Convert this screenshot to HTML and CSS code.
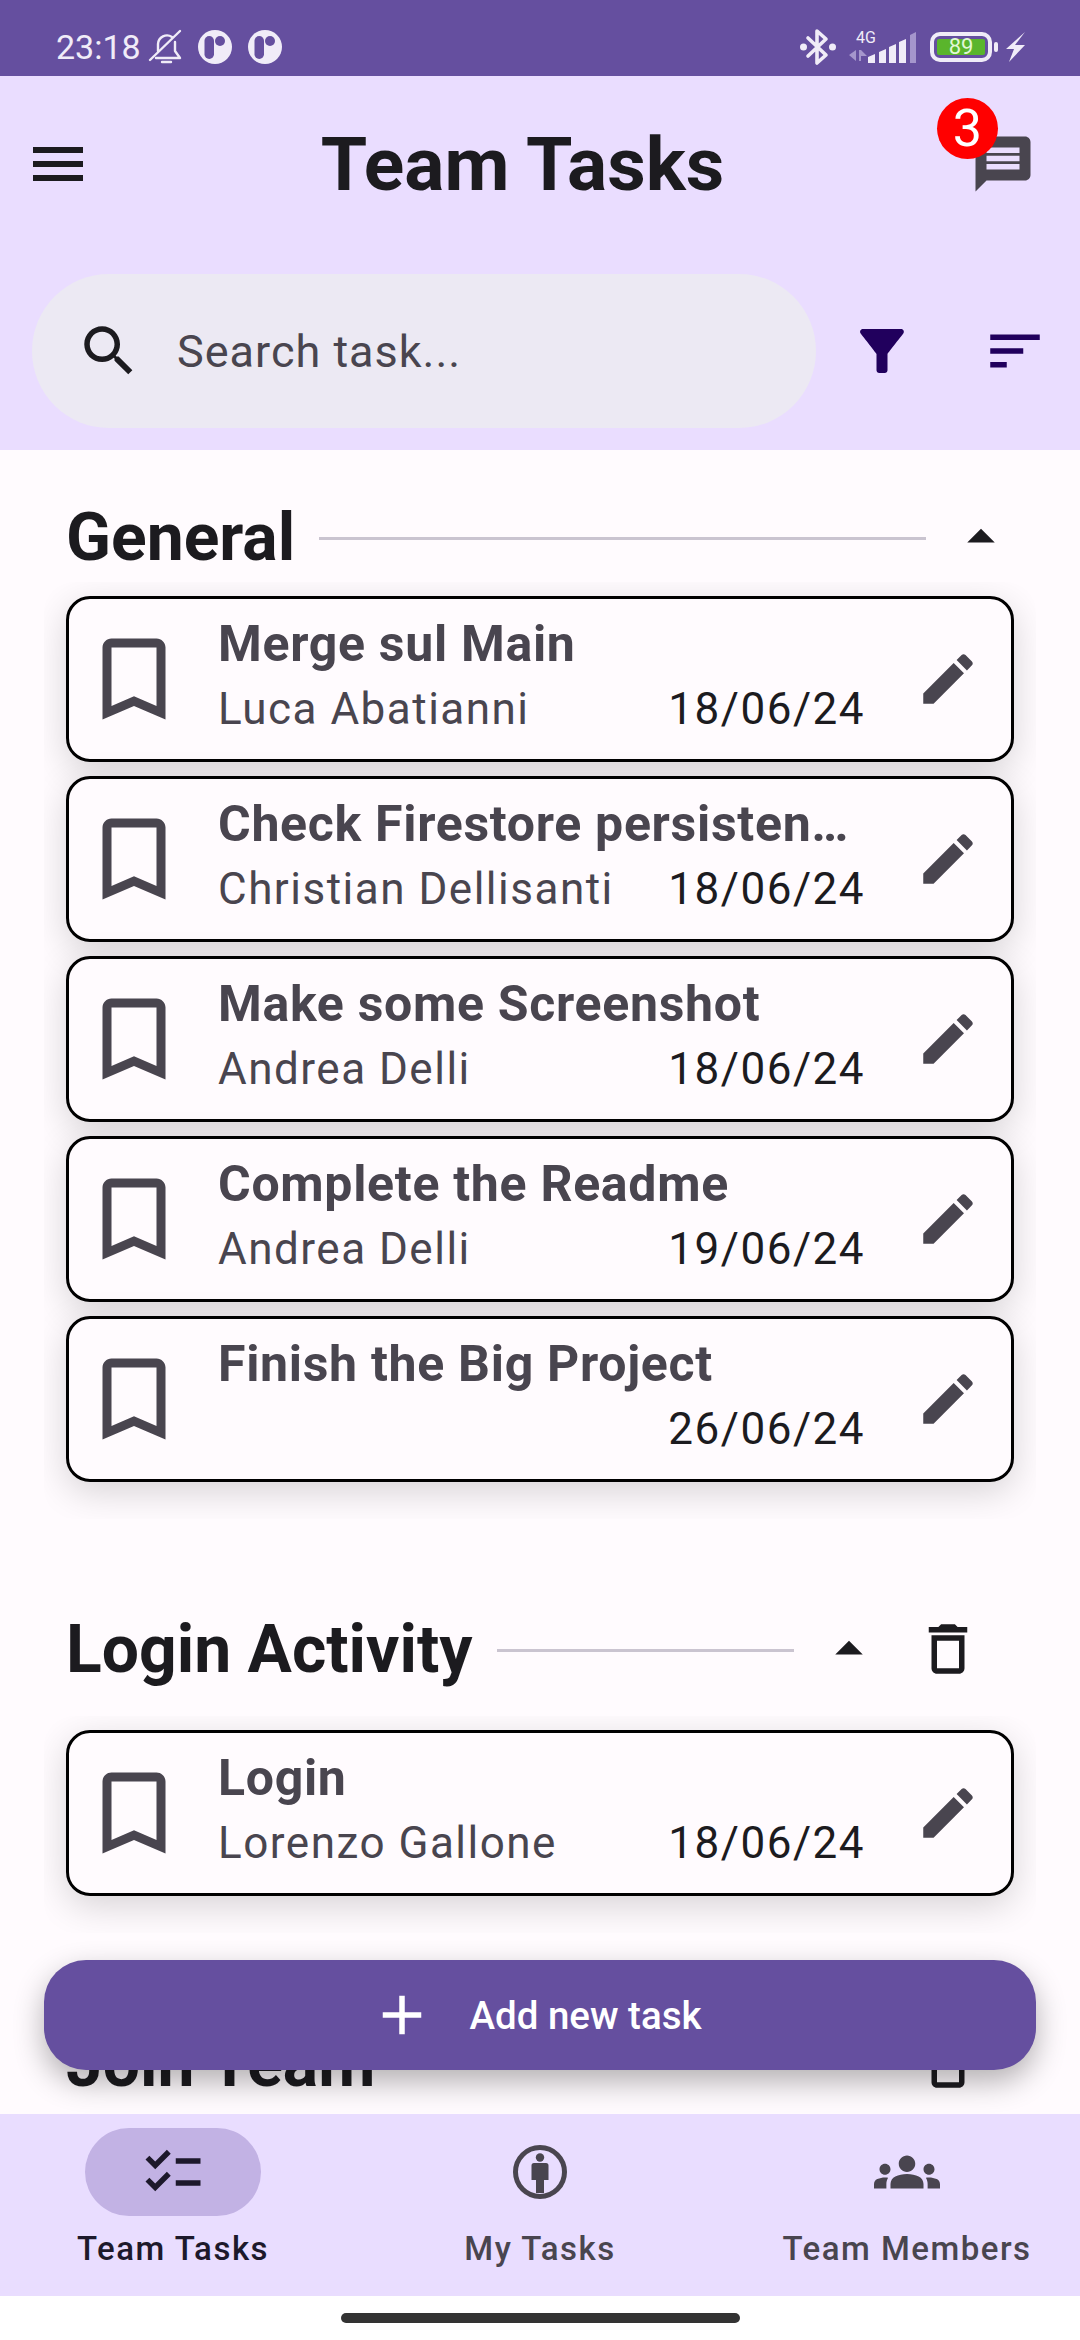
FILE: index.html
```html
<!DOCTYPE html>
<html lang="en">
<head>
  <meta charset="UTF-8" />
  <meta name="viewport" content="width=device-width, initial-scale=1.0"/>
  <title>Team Tasks</title>
  <link rel="stylesheet" href="styles.css">
</head>
<body>

  <div class="status-bar">
    <div class="status-left">
      <span class="clock">23:18</span>
      <svg class="bell-off" viewBox="0 0 36 36" fill="none" stroke="#f0ecf8" stroke-width="2.4" stroke-linecap="round" stroke-linejoin="round">
        <path d="M10 22V15a9 9 0 0 1 14-7"/>
        <path d="M27 13v9l5 7H8"/>
        <path d="M14 33h9"/>
        <path d="M2 31 32 2"/>
      </svg>
      <svg class="app-dot" viewBox="0 0 34 34">
        <circle cx="17" cy="17" r="17" fill="#f0ecf8"/>
        <rect x="6.5" y="6" width="9.5" height="23" rx="4.7" fill="#654f9f"/>
        <circle cx="22" cy="11" r="5" fill="#654f9f"/>
      </svg>
      <svg class="app-dot" viewBox="0 0 34 34">
        <circle cx="17" cy="17" r="17" fill="#f0ecf8"/>
        <rect x="6.5" y="6" width="9.5" height="23" rx="4.7" fill="#654f9f"/>
        <circle cx="22" cy="11" r="5" fill="#654f9f"/>
      </svg>
    </div>
    <div class="status-right">
      <svg class="bluetooth" viewBox="0 0 36 40">
        <path d="M8 11 26 28 17 36V4l9 8L8 29" fill="none" stroke="#f0ecf8" stroke-width="3.6" stroke-linejoin="round" stroke-linecap="round"/>
        <circle cx="3.5" cy="20" r="3.5" fill="#f0ecf8"/>
        <circle cx="32.5" cy="20" r="3.5" fill="#f0ecf8"/>
      </svg>
      <svg class="signal" viewBox="0 -8 68 40">
        <text class="net-label" x="7" y="12">4G</text>
        <path d="M7 19v11l-7-6zM12 19l6 6-6 0v5h-2V19z" fill="#a596cc"/>
        <path d="M19 26l7-3v9h-7zM30 21l7-3v14h-7zM40 16l7-3v19h-7zM50 11l7-3v24h-7z" fill="#f0ecf8"/>
        <path d="M61 4l6-3v31h-6z" fill="#a596cc"/>
      </svg>
      <div class="battery-wrap">
        <div class="battery"><span class="battery-fill">89</span></div>
        <span class="battery-tip"></span>
      </div>
      <svg class="bolt" viewBox="0 0 20 30">
        <path d="M19 0 9 13h10L3 30l5-13H0z" fill="#f0ecf8"/>
      </svg>
    </div>
  </div>

  <div class="top-bar">
    <div class="title-row">
      <svg class="menu-icon" viewBox="0 0 50 34"><path d="M0 0h50v6H0zM0 14h50v6H0zM0 28h50v6H0z"/></svg>
      <h1>Team Tasks</h1>
      <div class="chat-btn">
        <svg class="icon chat-icon" viewBox="0 0 24 24"><path d="M20 2H4c-1.100 0-1.990.9-1.990 2L2 22l4-4h14c1.100 0 2-.9 2-2V4c0-1.100-.9-2-2-2zm-2 12H6v-2h12v2zm0-3H6V9h12v2zm0-3H6V6h12v2z"/></svg>
        <span class="badge">3</span>
      </div>
    </div>
    <div class="search-row">
      <div class="search">
        <svg class="icon search-icon" viewBox="0 0 24 24"><path d="M15.500 14h-.79l-.28-.27C15.410 12.590 16 11.110 16 9.500 16 5.910 13.090 3 9.500 3S3 5.910 3 9.500 5.910 16 9.500 16c1.610 0 3.090-.59 4.230-1.570l.27.28v.79l5 4.990L20.490 19l-4.990-5zm-6 0C7.010 14 5 11.990 5 9.500S7.010 5 9.500 5 14 7.010 14 9.500 11.990 14 9.500 14z"/></svg>
        <span class="search-text">Search task...</span>
      </div>
      <svg class="icon filter-icon" viewBox="0 0 24 24"><path d="M4.250 5.610C6.270 8.200 10 13 10 13v6c0 .55.45 1 1 1h2c.55 0 1-.45 1-1v-6s3.720-4.800 5.740-7.390c.51-.66.04-1.610-.79-1.610H5.040c-.83 0-1.300.95-.79 1.610z"/></svg>
      <svg class="icon sort-icon" viewBox="0 0 24 24"><path d="M3 18h6v-2H3v2zM3 6v2h18V6H3zm0 7h12v-2H3v2z"/></svg>
    </div>
  </div>

  <div class="content">
    <div class="section">
      <div class="section-head">
        <h2>General</h2>
        <span class="rule"></span>
        <svg class="icon arrow" viewBox="0 0 24 24"><path d="M7 14l5-5 5 5z"/></svg>
      </div>
      <div class="card-group">
        <div class="card">
          <svg class="bookmark" viewBox="0 0 24 24"><path d="M17 3H7c-1.100 0-2 .9-2 2v16l7-3 7 3V5c0-1.100-.9-2-2-2zm0 15l-5-2.180L7 18V5h10v13z"/></svg>
          <div class="card-text">
            <div class="card-title">Merge sul Main</div>
            <div class="card-sub"><span>Luca Abatianni</span><span class="date">18/06/24</span></div>
          </div>
          <svg class="icon edit" viewBox="0 0 24 24"><path d="M3 17.250V21h3.750L17.810 9.940l-3.750-3.750L3 17.250zM20.710 7.040c.39-.39.39-1.020 0-1.410l-2.340-2.340c-.39-.39-1.020-.39-1.410 0l-1.830 1.830 3.750 3.750 1.830-1.830z"/></svg>
        </div>
        <div class="card">
          <svg class="bookmark" viewBox="0 0 24 24"><path d="M17 3H7c-1.100 0-2 .9-2 2v16l7-3 7 3V5c0-1.100-.9-2-2-2zm0 15l-5-2.180L7 18V5h10v13z"/></svg>
          <div class="card-text">
            <div class="card-title">Check Firestore persisten…</div>
            <div class="card-sub"><span>Christian Dellisanti</span><span class="date">18/06/24</span></div>
          </div>
          <svg class="icon edit" viewBox="0 0 24 24"><path d="M3 17.250V21h3.750L17.810 9.940l-3.750-3.750L3 17.250zM20.710 7.040c.39-.39.39-1.020 0-1.410l-2.340-2.340c-.39-.39-1.020-.39-1.410 0l-1.830 1.830 3.750 3.750 1.830-1.830z"/></svg>
        </div>
        <div class="card">
          <svg class="bookmark" viewBox="0 0 24 24"><path d="M17 3H7c-1.100 0-2 .9-2 2v16l7-3 7 3V5c0-1.100-.9-2-2-2zm0 15l-5-2.180L7 18V5h10v13z"/></svg>
          <div class="card-text">
            <div class="card-title">Make some Screenshot</div>
            <div class="card-sub"><span>Andrea Delli</span><span class="date">18/06/24</span></div>
          </div>
          <svg class="icon edit" viewBox="0 0 24 24"><path d="M3 17.250V21h3.750L17.810 9.940l-3.750-3.750L3 17.250zM20.710 7.040c.39-.39.39-1.020 0-1.410l-2.340-2.340c-.39-.39-1.020-.39-1.410 0l-1.830 1.830 3.750 3.750 1.830-1.830z"/></svg>
        </div>
        <div class="card">
          <svg class="bookmark" viewBox="0 0 24 24"><path d="M17 3H7c-1.100 0-2 .9-2 2v16l7-3 7 3V5c0-1.100-.9-2-2-2zm0 15l-5-2.180L7 18V5h10v13z"/></svg>
          <div class="card-text">
            <div class="card-title">Complete the Readme</div>
            <div class="card-sub"><span>Andrea Delli</span><span class="date">19/06/24</span></div>
          </div>
          <svg class="icon edit" viewBox="0 0 24 24"><path d="M3 17.250V21h3.750L17.810 9.940l-3.750-3.750L3 17.250zM20.710 7.040c.39-.39.39-1.020 0-1.410l-2.340-2.340c-.39-.39-1.020-.39-1.410 0l-1.830 1.830 3.750 3.750 1.830-1.830z"/></svg>
        </div>
        <div class="card">
          <svg class="bookmark" viewBox="0 0 24 24"><path d="M17 3H7c-1.100 0-2 .9-2 2v16l7-3 7 3V5c0-1.100-.9-2-2-2zm0 15l-5-2.180L7 18V5h10v13z"/></svg>
          <div class="card-text">
            <div class="card-title">Finish the Big Project</div>
            <div class="card-sub"><span></span><span class="date">26/06/24</span></div>
          </div>
          <svg class="icon edit" viewBox="0 0 24 24"><path d="M3 17.250V21h3.750L17.810 9.940l-3.750-3.750L3 17.250zM20.710 7.040c.39-.39.39-1.020 0-1.410l-2.340-2.340c-.39-.39-1.020-.39-1.410 0l-1.830 1.830 3.750 3.750 1.830-1.830z"/></svg>
        </div>
      </div>
    </div>

    <div class="section">
      <div class="section-head with-delete">
        <h2>Login Activity</h2>
        <span class="rule"></span>
        <svg class="icon arrow" viewBox="0 0 24 24"><path d="M7 14l5-5 5 5z"/></svg>
        <svg class="icon trash" viewBox="0 0 24 24"><path d="M6 19c0 1.100.9 2 2 2h8c1.100 0 2-.9 2-2V7H6v12zM8 9h8v10H8V9zm7.500-5l-1-1h-5l-1 1H5v2h14V4h-3.500z"/></svg>
      </div>
      <div class="card-group">
        <div class="card">
          <svg class="bookmark" viewBox="0 0 24 24"><path d="M17 3H7c-1.100 0-2 .9-2 2v16l7-3 7 3V5c0-1.100-.9-2-2-2zm0 15l-5-2.180L7 18V5h10v13z"/></svg>
          <div class="card-text">
            <div class="card-title">Login</div>
            <div class="card-sub"><span>Lorenzo Gallone</span><span class="date">18/06/24</span></div>
          </div>
          <svg class="icon edit" viewBox="0 0 24 24"><path d="M3 17.250V21h3.750L17.810 9.940l-3.750-3.750L3 17.250zM20.710 7.040c.39-.39.39-1.020 0-1.410l-2.340-2.340c-.39-.39-1.020-.39-1.410 0l-1.830 1.830 3.750 3.750 1.830-1.830z"/></svg>
        </div>
      </div>
    </div>

    <div class="section">
      <div class="section-head with-delete">
        <h2>Join Team</h2>
        <span class="rule"></span>
        <svg class="icon arrow" viewBox="0 0 24 24"><path d="M7 14l5-5 5 5z"/></svg>
        <svg class="icon trash" viewBox="0 0 24 24"><path d="M6 19c0 1.100.9 2 2 2h8c1.100 0 2-.9 2-2V7H6v12zM8 9h8v10H8V9zm7.500-5l-1-1h-5l-1 1H5v2h14V4h-3.500z"/></svg>
      </div>
    </div>

    <button class="fab">
      <svg class="icon" viewBox="0 0 24 24"><path d="M19 13h-6v6h-2v-6H5v-2h6V5h2v6h6v2z"/></svg>
      <span>Add new task</span>
    </button>
  </div>

  <div class="nav-bar">
    <div class="nav-item active">
      <div class="nav-pill">
        <svg class="icon" viewBox="0 0 24 24"><path d="M22 7h-9v2h9V7zm0 8h-9v2h9v-2zM5.540 11 2 7.460l1.410-1.410 2.120 2.120 4.240-4.240 1.410 1.410L5.540 11zm0 8L2 15.460l1.410-1.410 2.120 2.120 4.240-4.240 1.410 1.410L5.540 19z"/></svg>
      </div>
      <span class="nav-label">Team Tasks</span>
    </div>
    <div class="nav-item">
      <div class="nav-pill">
        <svg class="person-icon" viewBox="0 0 54 54">
          <circle cx="27" cy="27" r="24.500" fill="none" stroke="#49454f" stroke-width="5"/>
          <circle cx="27" cy="12.500" r="4.200"/>
          <path d="M21 18h12a2.500 2.500 0 0 1 2.500 2.500V35H31v13h-8V35h-4.500V20.500A2.500 2.500 0 0 1 21 18z"/>
        </svg>
      </div>
      <span class="nav-label">My Tasks</span>
    </div>
    <div class="nav-item">
      <div class="nav-pill">
        <svg class="icon" viewBox="0 0 24 24"><path d="M12 12.750c1.630 0 3.070.39 4.240.9 1.080.48 1.760 1.560 1.760 2.730V18H6v-1.610c0-1.180.68-2.260 1.760-2.730 1.170-.52 2.610-.91 4.240-.91zM4 13c1.100 0 2-.9 2-2s-.9-2-2-2-2 .9-2 2 .9 2 2 2zm1.130 1.100c-.37-.06-.74-.1-1.130-.1-.99 0-1.930.21-2.780.58C.48 14.900 0 15.620 0 16.430V18h4.500v-1.610c0-.83.23-1.610.63-2.290zM20 13c1.100 0 2-.9 2-2s-.9-2-2-2-2 .9-2 2 .9 2 2 2zm4 3.430c0-.81-.48-1.530-1.220-1.850-.85-.37-1.790-.58-2.780-.58-.39 0-.76.04-1.130.1.4.68.63 1.460.63 2.290V18H24v-1.570zM12 6c1.660 0 3 1.340 3 3s-1.340 3-3 3-3-1.340-3-3 1.340-3 3-3z"/></svg>
      </div>
      <span class="nav-label">Team Members</span>
    </div>
  </div>

  <div class="home-area"><span class="home-bar"></span></div>

</body>
</html>
```

FILE: styles.css
```css
body {
  margin: 0;
  width: 1080px;
  height: 2340px;
  overflow: hidden;
  display: flex;
  flex-direction: column;
  font-family: 'Roboto', sans-serif;
  background-color: #fffbfe;
  color: #1c1b1f;
}

.icon {
  width: 66px;
  height: 66px;
  flex: none;
  fill: #1c1b1f;
}

/* status bar */
.status-bar {
  height: 76px;
  flex: none;
  background: #654f9f;
  display: flex;
  justify-content: space-between;
  align-items: center;
  padding: 18px 54px 0 56px;
  box-sizing: border-box;
}

.status-left, .status-right {
  display: flex;
  align-items: center;
}

.clock {
  font-size: 34px;
  color: #f0ecf8;
  width: 92px;
}

.bell-off {
  width: 36px;
  height: 36px;
  margin-right: 14px;
}

.app-dot {
  width: 34px;
  height: 34px;
  margin-right: 16px;
}

.bluetooth {
  width: 36px;
  height: 40px;
  margin-right: 13px;
}

.signal {
  width: 68px;
  height: 40px;
  margin-top: -8px;
  margin-right: 13px;
}

.net-label {
  font-size: 16px;
  fill: #f0ecf8;
}

.battery-wrap {
  display: flex;
  align-items: center;
  margin-right: 8px;
}

.battery {
  width: 62px;
  height: 30px;
  box-sizing: border-box;
  border: 4px solid #f0ecf8;
  border-radius: 10px;
  padding: 3px;
  display: flex;
}

.battery-fill {
  flex: 1;
  background: #5ab52c;
  color: #e2f7d6;
  font-size: 22px;
  line-height: 16px;
  text-align: center;
  border-radius: 2px;
}

.battery-tip {
  width: 4px;
  height: 10px;
  margin-left: 2px;
  background: #f0ecf8;
  border-radius: 2px;
}

.bolt {
  width: 20px;
  height: 30px;
}

/* top bar */
.top-bar {
  height: 374px;
  flex: none;
  background: #eaddff;
  padding: 0 32px;
  box-sizing: border-box;
}

.title-row {
  height: 176px;
  margin-bottom: 22px;
  padding: 0 12px 0 1px;
  display: flex;
  align-items: center;
  justify-content: space-between;
}

.title-row h1 {
  margin: 0 8px 0 0;
  font-size: 75px;
  font-weight: 700;
  color: #1c1b1f;
}

.menu-icon {
  width: 50px;
  height: 34px;
  fill: #1c1b1f;
}

.chat-btn {
  position: relative;
}

.chat-icon {
  display: block;
  fill: #49454f;
}

.badge {
  position: absolute;
  left: -33px;
  top: -33px;
  width: 61px;
  height: 61px;
  border-radius: 50%;
  background: #ff0000;
  color: #ffffff;
  font-size: 52px;
  line-height: 61px;
  text-align: center;
}

.search-row {
  display: flex;
  align-items: center;
}

.search {
  width: 785px;
  height: 154px;
  border-radius: 77px;
  background: #ece9f3;
  display: flex;
  align-items: center;
  padding-left: 44px;
  box-sizing: border-box;
}

.search-text {
  margin-left: 35px;
  font-size: 45px;
  letter-spacing: 1px;
  color: #49454f;
}

.filter-icon {
  margin-left: 33px;
  fill: #21005d;
}

.sort-icon {
  margin-left: 67px;
  fill: #21005d;
}

/* sections */
.content {
  flex: 1;
  position: relative;
  overflow: hidden;
  padding-top: 42px;
}

.section + .section {
  margin-top: 85px;
}

.section-head {
  height: 90px;
  padding: 0 66px;
  display: flex;
  align-items: center;
}

.section-head.with-delete {
  margin-bottom: 22px;
  padding-right: 99px;
}

.section-head h2 {
  margin: 0;
  font-size: 66px;
  font-weight: 700;
  color: #1c1b1f;
  white-space: nowrap;
}

.rule {
  flex: 1;
  height: 3px;
  margin: 2px 22px 0 24px;
  background: #cac4d0;
}

.arrow {
  fill: #1c1b1f;
}

.trash {
  margin-left: 33px;
}

.card-group {
  margin: 0 44px;
  padding: 14px 22px 37px;
  overflow: hidden;
  border-radius: 30px;
  display: flex;
  flex-direction: column;
  gap: 14px;
}

.card {
  height: 166px;
  box-sizing: border-box;
  display: flex;
  align-items: center;
  border: 3px solid #000000;
  border-radius: 24px;
  background: #fffbfe;
  padding: 0 30px 0 11px;
  box-shadow: 0 10px 36px rgba(0, 0, 0, 0.16);
}

.bookmark {
  width: 108px;
  height: 108px;
  flex: none;
  fill: #49454f;
}

.edit {
  fill: #49454f;
}

.card-text {
  flex: 1;
  min-width: 0;
  margin: 0 50px 0 30px;
  padding-bottom: 5px;
}

.card-title {
  font-size: 50px;
  font-weight: 700;
  line-height: 64px;
  letter-spacing: 0.7px;
  color: #49454f;
  white-space: nowrap;
}

.card-sub {
  display: flex;
  justify-content: space-between;
  font-size: 44px;
  line-height: 66px;
  letter-spacing: 1.5px;
  color: #49454f;
}

.date {
  color: #1c1b1f;
}

/* add button, floats over the list */
.fab {
  position: absolute;
  left: 44px;
  right: 44px;
  bottom: 44px;
  height: 110px;
  border: none;
  border-radius: 42px;
  padding: 0 9px 0 0;
  background: #654f9f;
  color: #ffffff;
  display: flex;
  align-items: center;
  justify-content: center;
  gap: 34px;
  font-family: 'Roboto', sans-serif;
  font-size: 38.5px;
  font-weight: 500;
  box-shadow: 0 12px 30px rgba(0, 0, 0, 0.3);
}

.fab .icon {
  fill: #ffffff;
}

/* bottom nav */
.nav-bar {
  height: 182px;
  flex: none;
  background: #e9ddff;
  display: grid;
  grid-template-columns: repeat(3, 346px);
  gap: 21px;
}

.nav-item {
  display: flex;
  flex-direction: column;
  align-items: center;
  padding-top: 14px;
}

.nav-pill {
  width: 176px;
  height: 88px;
  border-radius: 44px;
  display: flex;
  align-items: center;
  justify-content: center;
}

.nav-pill .icon {
  fill: #49454f;
}

.person-icon {
  width: 54px;
  height: 54px;
  fill: #49454f;
}

.nav-label {
  margin-top: 8px;
  font-size: 33px;
  font-weight: 500;
  line-height: 50px;
  letter-spacing: 1.5px;
  color: #49454f;
}

.nav-item.active .nav-pill {
  background: #c2b2e4;
}

.nav-item.active .icon {
  fill: #1d192b;
}

.nav-item.active .nav-label {
  color: #1d192b;
}

.home-area {
  height: 44px;
  flex: none;
  background: #ffffff;
  display: flex;
  justify-content: center;
  padding-top: 17px;
  box-sizing: border-box;
}

.home-bar {
  width: 399px;
  height: 10px;
  border-radius: 5px;
  background: #333333;
}
```
